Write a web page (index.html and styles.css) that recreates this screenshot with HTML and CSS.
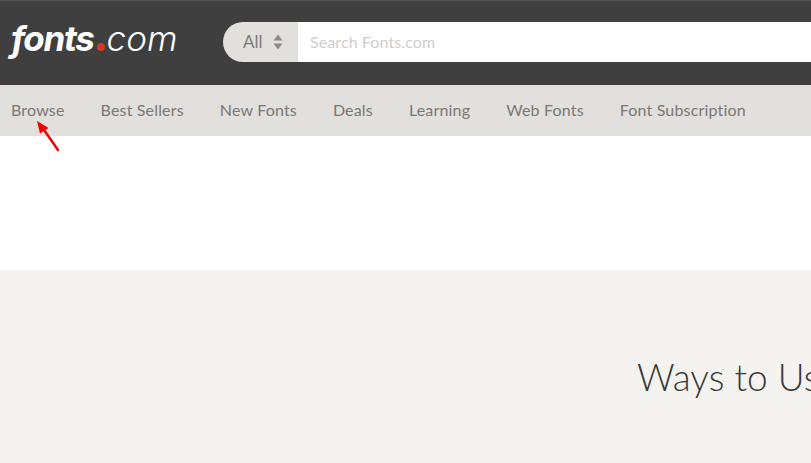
FILE: index.html
```html
<!DOCTYPE html>
<html>
<head>
    <meta charset="utf-8" />
    <title>Fonts.com</title>
    <link rel="stylesheet" href="styles.css">
</head>
<body>
    <div id="header">
        <div id="logo"><span class="logo_fonts">fonts</span><span class="logo_dot"></span><span class="logo_com">com</span></div>
        <div id="search">
            <div id="search_scope">
                <span>All</span>
                <svg class="scope_arrows" width="10" height="16" viewBox="0 0 10 16">
                    <path d="M5 0.5 L9.5 6.5 H0.5 Z" fill="#8c8a88"/>
                    <path d="M5 15.5 L9.5 9.5 H0.5 Z" fill="#8c8a88"/>
                </svg>
            </div>
            <div id="search_input">Search Fonts.com</div>
        </div>
    </div>
    <div id="nav">
        <a class="nav_item">Browse</a>
        <a class="nav_item">Best Sellers</a>
        <a class="nav_item">New Fonts</a>
        <a class="nav_item">Deals</a>
        <a class="nav_item">Learning</a>
        <a class="nav_item">Web Fonts</a>
        <a class="nav_item">Font Subscription</a>
    </div>
    <svg id="arrow" width="26" height="34" viewBox="0 0 26 34">
        <path d="M22 30 L6 7" stroke="#f00000" stroke-width="2.4" stroke-linecap="round"/>
        <path d="M1 1 L12.5 8 L4 13.5 Z" fill="#f00000"/>
    </svg>
    <div id="banner"></div>
    <div id="ways">
        <h2>Ways to Use</h2>
    </div>
</body>
</html>
```

FILE: styles.css
```css
html, body {
    margin: 0;
    height: 100%;
    overflow: hidden;
    background-color: #ffffff;
}
body {
    font-family: "Lato", "Open Sans", sans-serif;
}
#header {
    display: flex;
    align-items: center;
    height: 85px;
    box-sizing: border-box;
    padding: 0 0 0 11px;
    background-color: #3f3f3f;
    border-top: 1px solid #555555;
}
#logo {
    display: flex;
    align-items: baseline;
    width: 212px;
    height: 42px;
    margin-top: -11px;
    color: #ffffff;
    font-family: "Inter", "Lato", sans-serif;
    font-size: 35px;
    font-style: italic;
    line-height: 42px;
    white-space: nowrap;
}
.logo_fonts {
    font-weight: 700;
    letter-spacing: -1.3px;
}
.logo_dot {
    width: 8px;
    height: 8px;
    margin: 0 2px 0 3px;
    border-radius: 50%;
    background-color: #d13a26;
}
.logo_com {
    font-weight: 300;
    letter-spacing: 0;
}
#search {
    display: flex;
    flex: 1;
    height: 40px;
    margin-top: -3px;
}
#search_scope {
    display: flex;
    align-items: center;
    width: 75px;
    box-sizing: border-box;
    padding-left: 20px;
    border-radius: 20px 0 0 20px;
    background-color: #e1e0dc;
    color: #7d7b79;
    font-size: 17px;
}
.scope_arrows {
    margin-left: 10px;
}
#search_input {
    flex: 1;
    padding-left: 12px;
    background-color: #ffffff;
    color: #cfcdcb;
    font-size: 16px;
    letter-spacing: 0.1px;
    line-height: 40px;
}
#nav {
    display: flex;
    gap: 36px;
    height: 51px;
    padding-left: 11px;
    background-color: #e1e0dc;
    color: #7a7774;
    font-size: 16px;
    letter-spacing: 0.17px;
    line-height: 50px;
}
.nav_item {
    white-space: nowrap;
}
#arrow {
    position: absolute;
    left: 36px;
    top: 120px;
}
#banner {
    height: 134px;
    background-color: #ffffff;
}
#ways {
    height: 200px;
    padding-left: 637px;
    background-color: #f5f3f0;
}
#ways h2 {
    margin: 0;
    padding-top: 84px;
    color: #3a3a3a;
    font-size: 37px;
    font-weight: 300;
    line-height: 46px;
    white-space: nowrap;
}
```
